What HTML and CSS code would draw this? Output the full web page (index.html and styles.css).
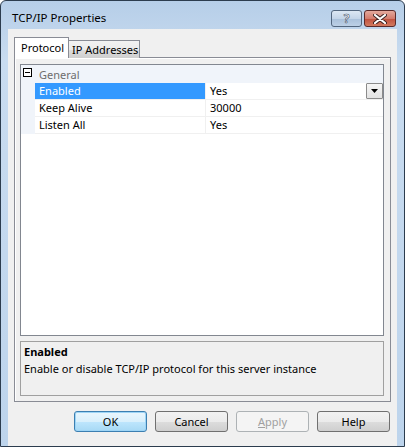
FILE: index.html
```html
<!DOCTYPE html>
<html lang="en">
<head>
    <meta charset="UTF-8">
    <title>TCP/IP Properties</title>
    <link rel="stylesheet" href="styles.css">
</head>
<body>
    <div class="window">
        <div class="titlebar">
            <span class="title">TCP/IP Properties</span>
            <div class="caption-buttons">
                <div class="cap-btn help-btn">?</div>
                <div class="cap-btn close-btn">
                    <svg width="14" height="10" viewBox="0 0 14 10">
                        <path d="M2 1 L12 9 M12 1 L2 9" stroke="#3a2020" stroke-width="4" stroke-linecap="round"/>
                        <path d="M2 1 L12 9 M12 1 L2 9" stroke="#ffffff" stroke-width="2.2" stroke-linecap="round"/>
                    </svg>
                </div>
            </div>
        </div>

        <div class="client">
            <div class="tabs">
                <div class="tab active">Protocol</div>
                <div class="tab">IP Addresses</div>
            </div>

            <div class="tab-panel">
                <div class="grid">
                    <div class="row category">
                        <div class="gutter"><span class="expander"></span></div>
                        <div class="cat-label">General</div>
                    </div>
                    <div class="row">
                        <div class="gutter"></div>
                        <div class="name selected">Enabled</div>
                        <div class="value">
                            Yes
                            <span class="drop-btn">
                                <svg width="7" height="4" viewBox="0 0 7 4"><path d="M0 0 H7 L3.5 4 Z" fill="#000"/></svg>
                            </span>
                        </div>
                    </div>
                    <div class="row">
                        <div class="gutter"></div>
                        <div class="name">Keep Alive</div>
                        <div class="value">30000</div>
                    </div>
                    <div class="row">
                        <div class="gutter"></div>
                        <div class="name">Listen All</div>
                        <div class="value">Yes</div>
                    </div>
                </div>

                <div class="description">
                    <div class="desc-title">Enabled</div>
                    <div class="desc-text">Enable or disable TCP/IP protocol for this server instance</div>
                </div>
            </div>

            <div class="buttons">
                <button class="btn default">OK</button>
                <button class="btn">Cancel</button>
                <button class="btn" disabled><u>A</u>pply</button>
                <button class="btn">Help</button>
            </div>
        </div>
    </div>
</body>
</html>
```

FILE: styles.css
```css
html, body {
    margin: 0;
    padding: 0;
    background: #ffffff;
}

body {
    font-family: "Noto Sans", "Open Sans", sans-serif;
    font-size: 11px;
    color: #000;
}

.window {
    box-sizing: border-box;
    width: 405px;
    height: 447px;
    border: 1px solid #2c3c4e;
    border-radius: 6px 6px 0 0;
    background: linear-gradient(#b6cee8, #c9dcf0 60px, #bdd4ec);
    display: flex;
    flex-direction: column;
}

.titlebar {
    height: 28px;
    display: flex;
    justify-content: space-between;
    align-items: flex-start;
    padding: 0 8px 0 11px;
}

.title {
    margin-top: 9px;
    font-size: 11.5px;
    color: #000;
}

.caption-buttons {
    display: flex;
    gap: 2px;
    margin-top: 9px;
}

.cap-btn {
    box-sizing: border-box;
    height: 17px;
    border: 1px solid #52667e;
    border-radius: 3px;
    display: flex;
    align-items: center;
    justify-content: center;
}

.help-btn {
    width: 31px;
    background: linear-gradient(#dce7f3, #c4d5e8 50%, #a9c0da 51%, #bcd0e6);
    font-weight: bold;
    font-size: 12px;
    line-height: 1;
    color: #ffffff;
    -webkit-text-stroke: 0.6px #3d4f66;
}

.close-btn {
    width: 32px;
    border-color: #5a2a2a;
    background: linear-gradient(#e4a99d, #d37c6e 50%, #c0503e 51%, #d27a5f);
}

.client {
    flex: 1;
    margin: 0 7px;
    background: #f0f0f0;
    padding: 8px 6px 0 6px;
    display: flex;
    flex-direction: column;
}

.tabs {
    display: flex;
    align-items: flex-end;
    height: 21px;
    margin-bottom: -1px;
    position: relative;
    z-index: 1;
}

.tab {
    box-sizing: border-box;
    height: 18px;
    padding: 0 4px;
    border: 1px solid #898c95;
    border-bottom: none;
    background: linear-gradient(#f2f2f2, #ebebeb 50%, #dddddd 51%, #cfcfcf);
    line-height: 17px;
    white-space: nowrap;
}

.tab.active {
    width: 55px;
    height: 21px;
    padding: 0 0 0 6px;
    background: #ffffff;
    line-height: 19px;
    z-index: 2;
}

.tab.active + .tab {
    margin-left: -1px;
    width: 72px;
    padding: 0 0 0 3px;
}

.tab-panel {
    box-sizing: border-box;
    height: 345px;
    border: 1px solid #898c95;
    background: #f0f0f0;
    box-shadow: inset 1px 1px 0 #ffffff;
    padding: 6px 6px 5px 5px;
    display: flex;
    flex-direction: column;
    gap: 5px;
}

.grid {
    height: 272px;
    box-sizing: border-box;
    border: 1px solid #828790;
    background: #ffffff;
}

.row {
    display: flex;
    height: 17px;
    line-height: 16px;
}

.row.category {
    height: 18px;
    line-height: 19px;
    background: #f0f4fa;
}

.gutter {
    width: 14px;
    flex-shrink: 0;
    background: #f0f4fa;
    position: relative;
}

.expander {
    position: absolute;
    left: 2px;
    top: 3px;
    width: 7px;
    height: 7px;
    border: 1px solid #000;
    background: #fff;
}

.expander::after {
    content: "";
    position: absolute;
    left: 1px;
    top: 3px;
    width: 5px;
    height: 1px;
    background: #000;
}

.cat-label {
    padding-left: 4px;
    color: #6d6d6d;
}

.name {
    width: 171px;
    box-sizing: border-box;
    padding-left: 4px;
    border-right: 1px solid #f0f0f0;
    border-bottom: 1px solid #f0f0f0;
}

.name.selected {
    background: #3399ff;
    color: #ffffff;
}

.value {
    flex: 1;
    padding-left: 4px;
    border-bottom: 1px solid #f0f0f0;
    position: relative;
}

.drop-btn {
    position: absolute;
    right: 0;
    top: 0;
    box-sizing: border-box;
    width: 17px;
    height: 16px;
    border: 1px solid #8b8b8b;
    border-radius: 1px;
    background: linear-gradient(#f6f6f6, #e2e2e2);
    display: flex;
    align-items: center;
    justify-content: center;
}

.description {
    box-sizing: border-box;
    height: 55px;
    border: 1px solid #a0a0a0;
    padding: 1px 3px;
    line-height: 17px;
}

.desc-title {
    font-weight: bold;
}

.buttons {
    display: flex;
    justify-content: flex-end;
    gap: 8px;
    padding: 9px 1px 0 0;
}

.btn {
    box-sizing: border-box;
    width: 73px;
    height: 21px;
    border: 1px solid #707070;
    border-radius: 3px;
    background: linear-gradient(#f2f2f2, #ebebeb 50%, #dddddd 51%, #cfcfcf);
    font-family: "Noto Sans", "Open Sans", sans-serif;
    font-size: 11px;
    color: #000;
    padding: 0;
}

.btn.default {
    border-color: #3c7fb1;
    background: linear-gradient(#eaf6fd, #d9f0fc 50%, #bee6fd 51%, #a7d9f5);
    box-shadow: inset 0 0 0 1px #9ed5f6;
}

.btn:disabled {
    border-color: #adb2b5;
    background: #f4f4f4;
    color: #a0a0a0;
}
```
